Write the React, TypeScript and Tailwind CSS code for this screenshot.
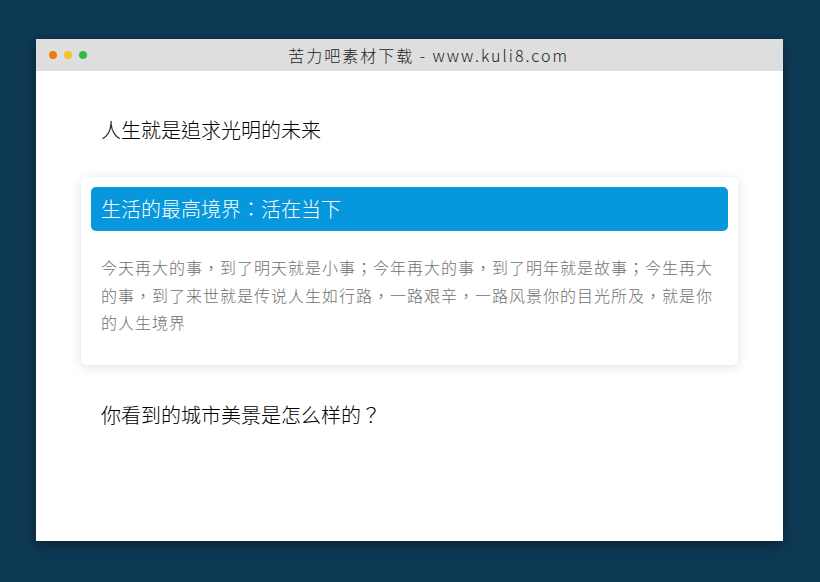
const FONT = "font-['Noto_Sans_CJK_TC','Noto_Sans_CJK_SC',sans-serif]";

function Dot({ color }: { color: string }) {
	return <span className={`block w-[8px] h-[8px] rounded-full ${color}`} />;
}

export default function App() {
	return (
		<div className={`w-[820px] h-[582px] bg-[#0e3a56] pt-[39px] pl-[36px] ${FONT}`}>
			<div className="w-[747px] h-[502px] bg-white flex flex-col shadow-[0_4px_14px_rgba(0,0,0,0.45)]">
				{/* title bar */}
				<div className="h-[32px] bg-[#dedede] flex items-center relative">
					<div className="flex gap-[7px] pl-[13px]">
						<Dot color="bg-[#f27a0d]" />
						<Dot color="bg-[#f5c524]" />
						<Dot color="bg-[#2ebd3b]" />
					</div>
					<div className="absolute inset-0 flex items-center justify-center pl-[38px] text-[16px] tracking-[2px] text-[#222] font-light">
						苦力吧素材下载 - www.kuli8.com
					</div>
				</div>

				{/* content */}
				<div className="flex flex-col px-[45px] pt-[44px]">
					<h2 className="px-[20px] text-[20px] leading-[30px] text-black font-light">
						人生就是追求光明的未来
					</h2>

					<div className="mt-[32px] bg-white rounded-[6px] p-[10px] pb-[28px] shadow-[0_2px_12px_rgba(0,0,0,0.12)]">
						<div className="h-[44px] bg-[#0797dc] rounded-[5px] flex items-center px-[10px] text-[20px] text-white font-light">
							生活的最高境界：活在当下
						</div>
						<p className="mt-[23px] px-[10px] text-[16px] leading-[27.5px] tracking-[1px] text-[#707070] font-light">
							今天再大的事，到了明天就是小事；今年再大的事，到了明年就是故事；今生再大的事，到了来世就是传说人生如行路，一路艰辛，一路风景你的目光所及，就是你的人生境界
						</p>
					</div>

					<h2 className="mt-[35px] px-[20px] text-[20px] leading-[30px] text-black font-light">
						你看到的城市美景是怎么样的？
					</h2>
				</div>
			</div>
		</div>
	);
}
